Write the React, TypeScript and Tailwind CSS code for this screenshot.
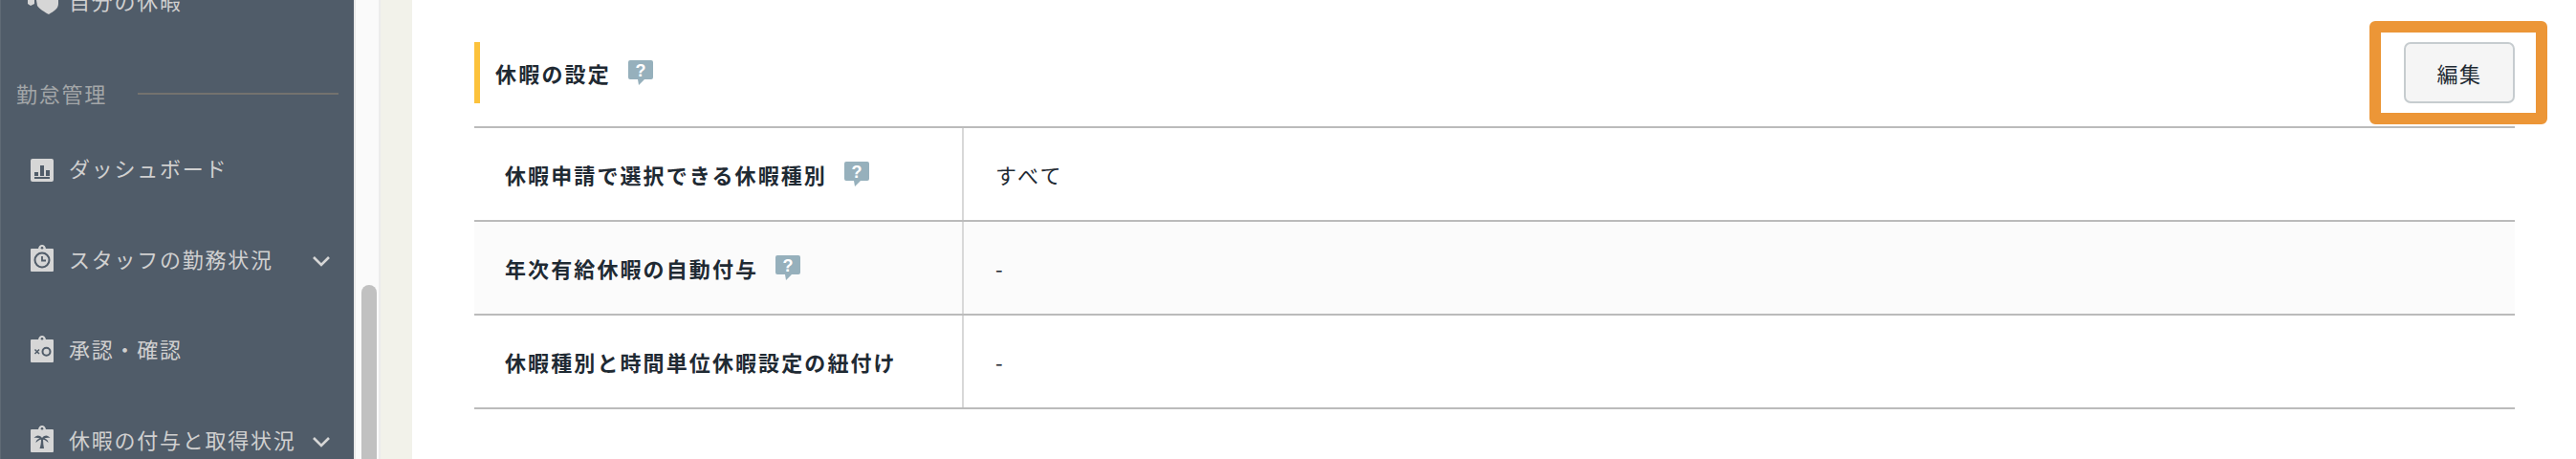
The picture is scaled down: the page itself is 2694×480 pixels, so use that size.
import React from "react";

const font = { fontFamily: '"Noto Sans CJK JP", "Noto Sans", sans-serif' };

function Help() {
  return (
    <svg width="26" height="27" viewBox="0 0 26 27" className="shrink-0">
      <path d="M2 0H24Q26 0 26 2V18Q26 20 24 20H17L11 26L10 20H2Q0 20 0 18V2Q0 0 2 0Z" fill="#96b0bc" />
      <text x="13" y="16.5" textAnchor="middle" fontSize="18" fontWeight="700" fill="#fff" fontFamily="Liberation Sans, sans-serif">?</text>
    </svg>
  );
}

function Bag({ children }: { children: React.ReactNode }) {
  return (
    <svg width="24" height="28" viewBox="0 0 24 28" className="shrink-0">
      <path d="M1 4H8C8.5 1.5 10 0 12 0C14 0 15.500 1.500 16 4H23Q24 4 24 5V27Q24 28 23 28H1Q0 28 0 27V5Q0 4 1 4Z" fill="#d6d6d6" />
      <circle cx="12" cy="3.200" r="1.300" fill="#505c69" />
      {children}
    </svg>
  );
}

function Chevron() {
  return (
    <svg width="20" height="12" viewBox="0 0 20 12" className="shrink-0 mt-[6px]">
      <path d="M2 2L10 10L18 2" fill="none" stroke="#d6d6d6" strokeWidth="2.600" />
    </svg>
  );
}

function NavItem({ icon, label, chevron }: { icon: React.ReactNode; label: string; chevron?: boolean }) {
  return (
    <div className="h-[94.5px] flex items-center pl-[31px] pr-[24px] text-[#d0d0d0] text-[22px] tracking-[1.76px]">
      <div className="w-[40px] flex items-center">{icon}</div>
      <span className="flex-1 whitespace-nowrap">{label}</span>
      {chevron && <Chevron />}
    </div>
  );
}

function Row({ label, value, help, shaded }: { label: string; value: string; help?: boolean; shaded?: boolean }) {
  return (
    <div className={`flex h-[98px] border-b-2 border-[#bbbbbb] ${shaded ? "bg-[#fbfbfb]" : "bg-white"}`}>
      <div className="w-[512px] h-full border-r-2 border-[#d8d8d8] flex items-center pl-[32px] gap-[18px]">
        <span className="text-[22px] font-bold tracking-[2.1px] text-[#1f2a33] whitespace-nowrap">{label}</span>
        {help && <Help />}
      </div>
      <div className="flex-1 flex items-center pl-[33px] text-[22px] tracking-[2.5px] text-[#1f2a33]">{value}</div>
    </div>
  );
}

export default function App() {
  return (
    <div className="flex h-[480px] w-[2694px] overflow-hidden bg-white" style={font}>
      <aside className="w-[370px] shrink-0 bg-[#505c69] border-l border-[#5f6a75] overflow-hidden">
        <div className="-mt-[47px]">
          <NavItem
            label="自分の休暇"
            icon={
              <svg width="32" height="30" viewBox="0 0 32 30" className="shrink-0 -ml-[3px]">
                <path d="M0 15H7V19L3 21L0 19Z" fill="#d6d6d6" />
                <path d="M9 15H32V19C32 24 27 27 22 30C18 28 12 24 10 21Z" fill="#d6d6d6" />
              </svg>
            }
          />
        </div>
        <div className="h-[81px] pt-[32px] pl-[16px] pr-[16px]">
          <div className="h-[36px] flex items-center w-full gap-[32px] text-[#a3a6a8] text-[22px] tracking-[1.76px]">
            <span className="whitespace-nowrap">勤怠管理</span>
            <div className="flex-1 h-[2px] bg-[#73726e]" />
          </div>
        </div>
        <div>
          <NavItem
            label="ダッシュボード"
            icon={
              <svg width="24" height="24" viewBox="0 0 24 24" className="mt-[4px]">
                <rect width="24" height="24" rx="2" fill="#d6d6d6" />
                <path d="M4 14h4v4H4zM10 7h4v11h-4zM16 12h4v6h-4zM4 19h16v2H4z" fill="#505c69" />
              </svg>
            }
          />
          <NavItem
            label="スタッフの勤務状況"
            chevron
            icon={
              <Bag>
                <circle cx="12" cy="16" r="7.500" fill="none" stroke="#505c69" strokeWidth="2" />
                <path d="M12 12V16.500H16" fill="none" stroke="#505c69" strokeWidth="1.800" />
              </Bag>
            }
          />
          <NavItem
            label="承認・確認"
            icon={
              <Bag>
                <path d="M4.500 14.500L9 19M9 14.500L4.500 19" stroke="#505c69" strokeWidth="1.500" />
                <circle cx="16.500" cy="16.800" r="4" fill="none" stroke="#505c69" strokeWidth="2" />
              </Bag>
            }
          />
          <NavItem
            label="休暇の付与と取得状況"
            chevron
            icon={
              <Bag>
                <path d="M12 13C9 9.500 6 10 3.500 13C6 12.500 8 12.800 9.500 13.500C7 14 5.500 16 5.500 18C7.500 16 9 15 11 14.800C11 18 10.500 21 9.500 24H14C13.500 21 13 18 13 14.800C15 15 16.500 16 18.500 18C18.500 16 17 14 14.500 13.500C16 12.800 18 12.500 20.500 13C18 10 15 9.500 12 13Z" fill="#505c69" />
              </Bag>
            }
          />
        </div>
      </aside>
      <div className="w-[2px] shrink-0 bg-[#e9e9e9]" />
      <div className="w-[26px] shrink-0 bg-[#fafafa] border-r-2 border-[#ececec] pl-[6px] pr-[2px]">
        <div className="mt-[298px] h-[182px] w-[16px] bg-[#c1c1c1] rounded-t-lg" />
      </div>
      <div className="w-[33px] shrink-0 bg-[#f2f2ea]" />
      <main className="flex-1 bg-white pl-[65px] pr-[64px] pt-[44px]">
        <div className="relative flex items-center justify-between h-[64px] mb-[24px]">
          <div className="flex items-center h-full border-l-[6px] border-[#fcc23c] pl-[16px] gap-[18px]">
            <span className="text-[22px] font-bold tracking-[2.2px] text-[#1f2a33]">休暇の設定</span>
            <Help />
          </div>
          <button className="w-[116px] h-[64px] bg-[#f5f5f5] border-2 border-[#c6cccf] rounded-[7px] text-[22px] tracking-[1.5px] text-[#1f2a33]">
            編集
          </button>
          <div className="absolute -right-[34px] -top-[22px] w-[186px] h-[108px] border-[12px] border-[#ec9637] rounded-[6px]" />
        </div>
        <div className="border-t-2 border-[#bbbbbb]">
          <Row label="休暇申請で選択できる休暇種別" value="すべて" help />
          <Row label="年次有給休暇の自動付与" value="-" help shaded />
          <Row label="休暇種別と時間単位休暇設定の紐付け" value="-" />
        </div>
      </main>
    </div>
  );
}
